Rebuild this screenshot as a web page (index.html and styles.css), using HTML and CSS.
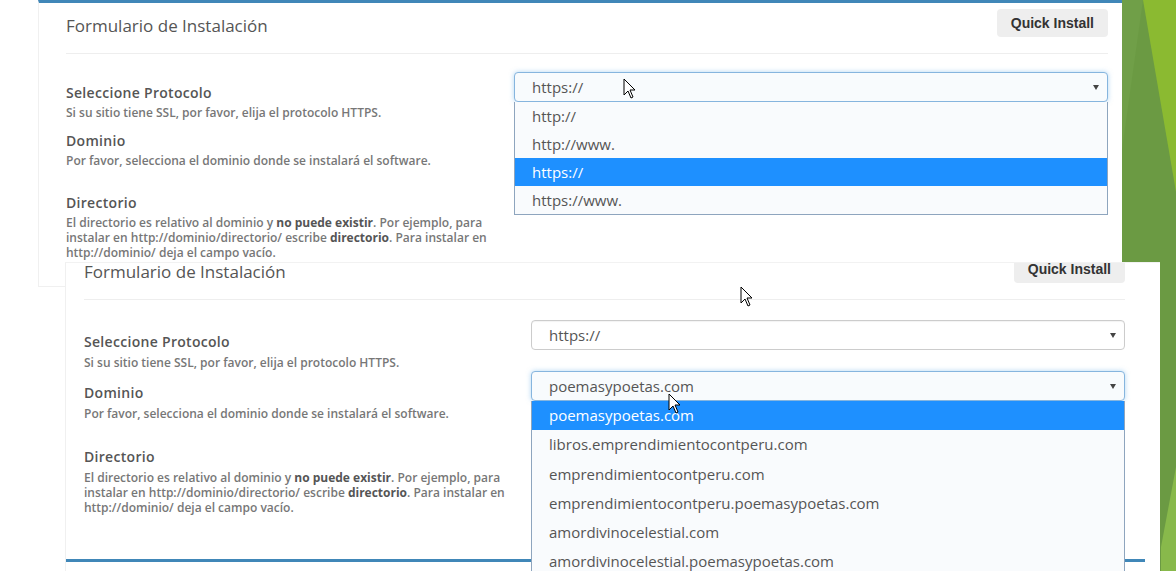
FILE: index.html
```html
<!DOCTYPE html>
<html lang="es">
<head>
    <meta charset="UTF-8">
    <meta name="viewport" content="width=device-width, initial-scale=1.0">
    <title>Formulario de Instalación</title>
    <link rel="stylesheet" href="styles.css">
</head>
<body>
    <!-- fondo verde de la diapositiva -->
    <svg class="deco" width="54" height="571" viewBox="0 0 54 571">
        <rect x="0" y="0" width="54" height="571" fill="#6b9a43"/>
        <polygon points="0,0 21,0 0,150" fill="#709f48"/>
        <polygon points="21,0 54,0 54,192" fill="#8bba31"/>
        <polygon points="39,547 54,467 54,571 39,571" fill="#88b94b"/>
    </svg>

    <div class="shot shot-a">
        <div class="card">
            <div class="card-header">
                <h2>Formulario de Instalación</h2>
                <button type="button" class="btn-quick">Quick Install</button>
            </div>
            <div class="form-body">
                <div class="form-row">
                    <div class="field-info">
                        <label>Seleccione Protocolo</label>
                        <p class="help">Si su sitio tiene SSL, por favor, elija el protocolo HTTPS.</p>
                    </div>
                    <div class="field-control">
                        <div class="select focused">https://</div>
                        <ul class="dropdown">
                            <li>http://</li>
                            <li>http://www.</li>
                            <li class="active">https://</li>
                            <li>https://www.</li>
                        </ul>
                    </div>
                </div>
                <div class="form-row row-domain">
                    <div class="field-info">
                        <label>Dominio</label>
                        <p class="help">Por favor, selecciona el dominio donde se instalará el software.</p>
                    </div>
                    <div class="field-control">
                        <div class="select">poemasypoetas.com</div>
                    </div>
                </div>
                <div class="form-row">
                    <div class="field-info">
                        <label>Directorio</label>
                        <p class="help">El directorio es relativo al dominio y <strong>no puede existir</strong>. Por ejemplo, para instalar en http://dominio/directorio/ escribe <strong>directorio</strong>. Para instalar en http://dominio/ deja el campo vacío.</p>
                    </div>
                    <div class="field-control"></div>
                </div>
            </div>
        </div>
    </div>

    <div class="shot shot-b">
        <div class="card">
            <div class="card-header">
                <h2>Formulario de Instalación</h2>
                <button type="button" class="btn-quick">Quick Install</button>
            </div>
            <div class="form-body">
                <div class="form-row">
                    <div class="field-info">
                        <label>Seleccione Protocolo</label>
                        <p class="help">Si su sitio tiene SSL, por favor, elija el protocolo HTTPS.</p>
                    </div>
                    <div class="field-control">
                        <div class="select">https://</div>
                    </div>
                </div>
                <div class="form-row row-domain">
                    <div class="field-info">
                        <label>Dominio</label>
                        <p class="help">Por favor, selecciona el dominio donde se instalará el software.</p>
                    </div>
                    <div class="field-control">
                        <div class="select focused">poemasypoetas.com</div>
                        <ul class="dropdown">
                            <li class="active">poemasypoetas.com</li>
                            <li>libros.emprendimientocontperu.com</li>
                            <li>emprendimientocontperu.com</li>
                            <li>emprendimientocontperu.poemasypoetas.com</li>
                            <li>amordivinocelestial.com</li>
                            <li>amordivinocelestial.poemasypoetas.com</li>
                        </ul>
                    </div>
                </div>
                <div class="form-row">
                    <div class="field-info">
                        <label>Directorio</label>
                        <p class="help">El directorio es relativo al dominio y <strong>no puede existir</strong>. Por ejemplo, para instalar en http://dominio/directorio/ escribe <strong>directorio</strong>. Para instalar en http://dominio/ deja el campo vacío.</p>
                    </div>
                    <div class="field-control"></div>
                </div>
            </div>
        </div>
        <div class="card card-next"></div>
    </div>

    <svg class="cursor cursor-a" width="13" height="21" viewBox="0 0 13 21">
        <path d="M1 1 L1 17 L5 13 L8 20 L10 19 L7 12 L12 12 Z" fill="#ffffff" stroke="#000000" stroke-width="1" stroke-linejoin="round"/>
    </svg>
    <svg class="cursor cursor-b" width="13" height="21" viewBox="0 0 13 21">
        <path d="M1 1 L1 17 L5 13 L8 20 L10 19 L7 12 L12 12 Z" fill="#ffffff" stroke="#000000" stroke-width="1" stroke-linejoin="round"/>
    </svg>
    <svg class="cursor cursor-c" width="13" height="21" viewBox="0 0 13 21">
        <path d="M1 1 L1 17 L5 13 L8 20 L10 19 L7 12 L12 12 Z" fill="#ffffff" stroke="#000000" stroke-width="1" stroke-linejoin="round"/>
    </svg>
</body>
</html>
```

FILE: styles.css
```css
* {
    box-sizing: border-box;
}

body {
    margin: 0;
    width: 1176px;
    height: 571px;
    position: relative;
    overflow: hidden;
    background: #ffffff;
    font-family: "Open Sans", Arial, sans-serif;
    color: #555555;
}

.deco {
    position: absolute;
    left: 1122px;
    top: 0;
    z-index: 2;
}

/* dos capturas superpuestas */
.shot-a {
    position: absolute;
    left: 38px;
    top: 0;
    width: 1084px;
    z-index: 1;
}

.shot-b {
    position: absolute;
    left: 65px;
    top: 262px;
    width: 1095px;
    height: 309px;
    overflow: hidden;
    background: #ffffff;
    border-top: 1px solid #f2f2f2;
    border-left: 1px solid #f0f0f0;
    z-index: 3;
}

.card {
    background: #ffffff;
    border-top: 3px solid #4087b8;
}

.shot-a .card {
    padding: 0 14px 26px 27px;
    border-left: 1px solid #f0f0f0;
    border-bottom: 1px solid #f0f0f0;
}

.shot-b .card {
    width: 1079px;
    margin-top: -17px;
    padding: 0 20px 25px 18px;
}

.shot-b .card-next {
    margin-top: 18px;
    height: 20px;
    padding: 0;
}

.card-header {
    display: flex;
    justify-content: space-between;
    align-items: flex-start;
    padding-top: 6px;
    padding-bottom: 16px;
    border-bottom: 1px solid #eeeeee;
}

h2 {
    margin: 8px 0 3px;
    font-size: 17px;
    font-weight: 400;
    line-height: 17px;
    color: #555555;
}

.btn-quick {
    height: 28px;
    padding: 0 14px;
    border: none;
    border-radius: 4px;
    background: #eeeeee;
    font-family: "Liberation Sans", Arial, sans-serif;
    font-size: 14px;
    font-weight: bold;
    color: #333333;
}

.form-body {
    padding-top: 18px;
}

.shot-b .form-body {
    padding-top: 20px;
}

.form-row {
    display: grid;
    grid-template-columns: 1fr 594px;
}

.row-domain {
    margin-bottom: 14px;
}

.shot-b .form-row {
    margin-bottom: 1px;
}

.shot-b .row-domain {
    margin-bottom: 14px;
}

.field-info {
    padding-top: 12px;
}

.shot-b .field-info {
    padding-top: 13px;
}

label {
    display: block;
    font-size: 14px;
    font-weight: 600;
    line-height: 18px;
    letter-spacing: 0.3px;
    color: #555555;
}

.help {
    max-width: 430px;
    margin: 3px 0 0;
    font-size: 12px;
    font-weight: 600;
    line-height: 15px;
    color: #777777;
}

.shot-b .help {
    margin-top: 4px;
}

.help strong {
    font-weight: 700;
    color: #555555;
}

.field-control {
    position: relative;
}

.select {
    position: relative;
    height: 30px;
    padding-left: 17px;
    border: 1px solid #cccccc;
    border-radius: 4px;
    background: #ffffff;
    box-shadow: inset 0 1px 1px rgba(0, 0, 0, 0.05);
    font-size: 15px;
    line-height: 28px;
    color: #555555;
}

.select::after {
    content: "";
    position: absolute;
    right: 8px;
    top: 12px;
    border-left: 3.5px solid transparent;
    border-right: 3.5px solid transparent;
    border-top: 5px solid #444444;
}

.select.focused {
    border-color: #86b5de;
    background: #f8fbfd;
    box-shadow: 0 0 5px rgba(102, 175, 233, 0.5);
}

.dropdown {
    position: absolute;
    top: 30px;
    left: 0;
    right: 0;
    margin: 0;
    padding: 0;
    list-style: none;
    background: #f9fbfd;
    border: 1px solid #8ea5be;
    border-top: none;
    z-index: 5;
}

.dropdown li {
    height: 28px;
    padding-left: 17px;
    font-size: 15px;
    line-height: 28px;
    color: #555555;
}

.shot-b .dropdown li {
    height: 29.3px;
    line-height: 29.3px;
}

.dropdown li.active {
    background: #1e90ff;
    color: #ffffff;
}

.cursor {
    position: absolute;
    z-index: 10;
}

.cursor-a {
    left: 623px;
    top: 78px;
}

.cursor-b {
    left: 740px;
    top: 286px;
}

.cursor-c {
    left: 668px;
    top: 393px;
}
```
